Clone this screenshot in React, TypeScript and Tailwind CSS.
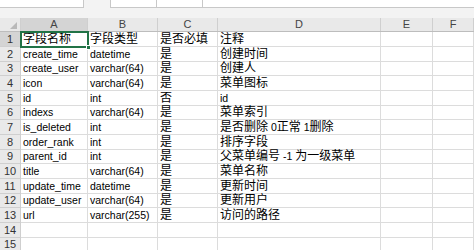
import React from "react";

const rows: string[][] = [
  ["字段名称", "字段类型", "是否必填", "注释"],
  ["create_time", "datetime", "是", "创建时间"],
  ["create_user", "varchar(64)", "是", "创建人"],
  ["icon", "varchar(64)", "是", "菜单图标"],
  ["id", "int", "否", "id"],
  ["indexs", "varchar(64)", "是", "菜单索引"],
  ["is_deleted", "int", "是", "是否删除 0正常 1删除"],
  ["order_rank", "int", "是", "排序字段"],
  ["parent_id", "int", "是", "父菜单编号 -1 为一级菜单"],
  ["title", "varchar(64)", "是", "菜单名称"],
  ["update_time", "datetime", "是", "更新时间"],
  ["update_user", "varchar(64)", "是", "更新用户"],
  ["url", "varchar(255)", "是", "访问的路径"],
  [],
  [],
];

const colW = ["w-[67px]", "w-[70px]", "w-[60px]", "w-[163px]", "w-[52px]", "flex-1"];
const colL = ["A", "B", "C", "D", "E", "F"];

function Mixed({ s }: { s: string }) {
  const parts = s.split(/([\u4e00-\u9fff]+)/).filter((p) => p.length > 0);
  return (
    <>
      {parts.map((p, i) =>
        /[\u4e00-\u9fff]/.test(p) ? (
          <span key={i} className="text-[12px] leading-[13px]">
            {p}
          </span>
        ) : (
          <span key={i} className="text-[10.5px] leading-[13px] whitespace-pre">
            {p}
          </span>
        )
      )}
    </>
  );
}

export default function App() {
  return (
    <div
      className="w-[474px] h-[250px] overflow-hidden bg-white text-black"
      style={{ fontFamily: '"Liberation Sans", "Noto Sans CJK SC", sans-serif' }}
    >
      {/* top strip (name box / formula bar, cut off) */}
      <div className="h-[18px] bg-[#f3f3f3] flex items-start">
        <div className="w-[84px] h-[8px] bg-white border-b border-r border-[#c8c8c8]" />
        <div className="w-[26px]" />
        <div className="w-[47px] h-[8px] bg-white border-b border-l border-r border-[#c8c8c8]" />
        <div className="w-[45px] h-[8px] bg-white border-b border-[#c8c8c8]" />
        <div className="flex-1 h-[8px] bg-white border-b border-l border-[#c8c8c8]" />
      </div>

      {/* column headers */}
      <div className="flex h-[14px] bg-[#e9e9e9] border-b border-[#bdbdbd]">
        <div className="w-[21px] h-full border-r border-[#cfcfcf] relative">
          <div className="absolute right-[3px] bottom-[2px] w-0 h-0 border-l-[7px] border-l-transparent border-b-[7px] border-b-[#b9b9b9]" />
        </div>
        {colL.map((c, i) => (
          <div
            key={c}
            className={`${colW[i]} h-full flex items-center justify-center text-[11px] text-[#444] border-r border-[#cfcfcf] ${
              i === 0 ? "bg-[#d4d4d4]" : ""
            }`}
          >
            {c}
          </div>
        ))}
      </div>

      {/* body */}
      <div className="relative">
        {rows.map((r, ri) => (
          <div
            key={ri}
            className={`flex ${ri % 3 === 2 ? "h-[14px]" : "h-[15px]"}`}
          >
            <div
              className={`w-[21px] h-full flex items-center justify-center text-[11px] text-[#333] border-r border-b border-[#cfcfcf] ${
                ri === 0 ? "bg-[#d4d4d4]" : "bg-[#e9e9e9]"
              }`}
            >
              {ri + 1}
            </div>
            {colW.map((w, ci) => (
              <div
                key={ci}
                className={`${w} h-full flex items-end pl-[2px] border-r border-b border-[#dcdcdc] overflow-visible whitespace-nowrap`}
              >
                {r[ci] ? <Mixed s={r[ci]} /> : null}
              </div>
            ))}
          </div>
        ))}
        {/* selection A1 */}
        <div className="absolute left-[20px] top-[-1px] w-[69px] h-[17px] border-2 border-[#217346] pointer-events-none">
          <div className="absolute right-[-4px] bottom-[-4px] w-[5px] h-[5px] bg-[#217346] border border-white" />
        </div>
      </div>
    </div>
  );
}
